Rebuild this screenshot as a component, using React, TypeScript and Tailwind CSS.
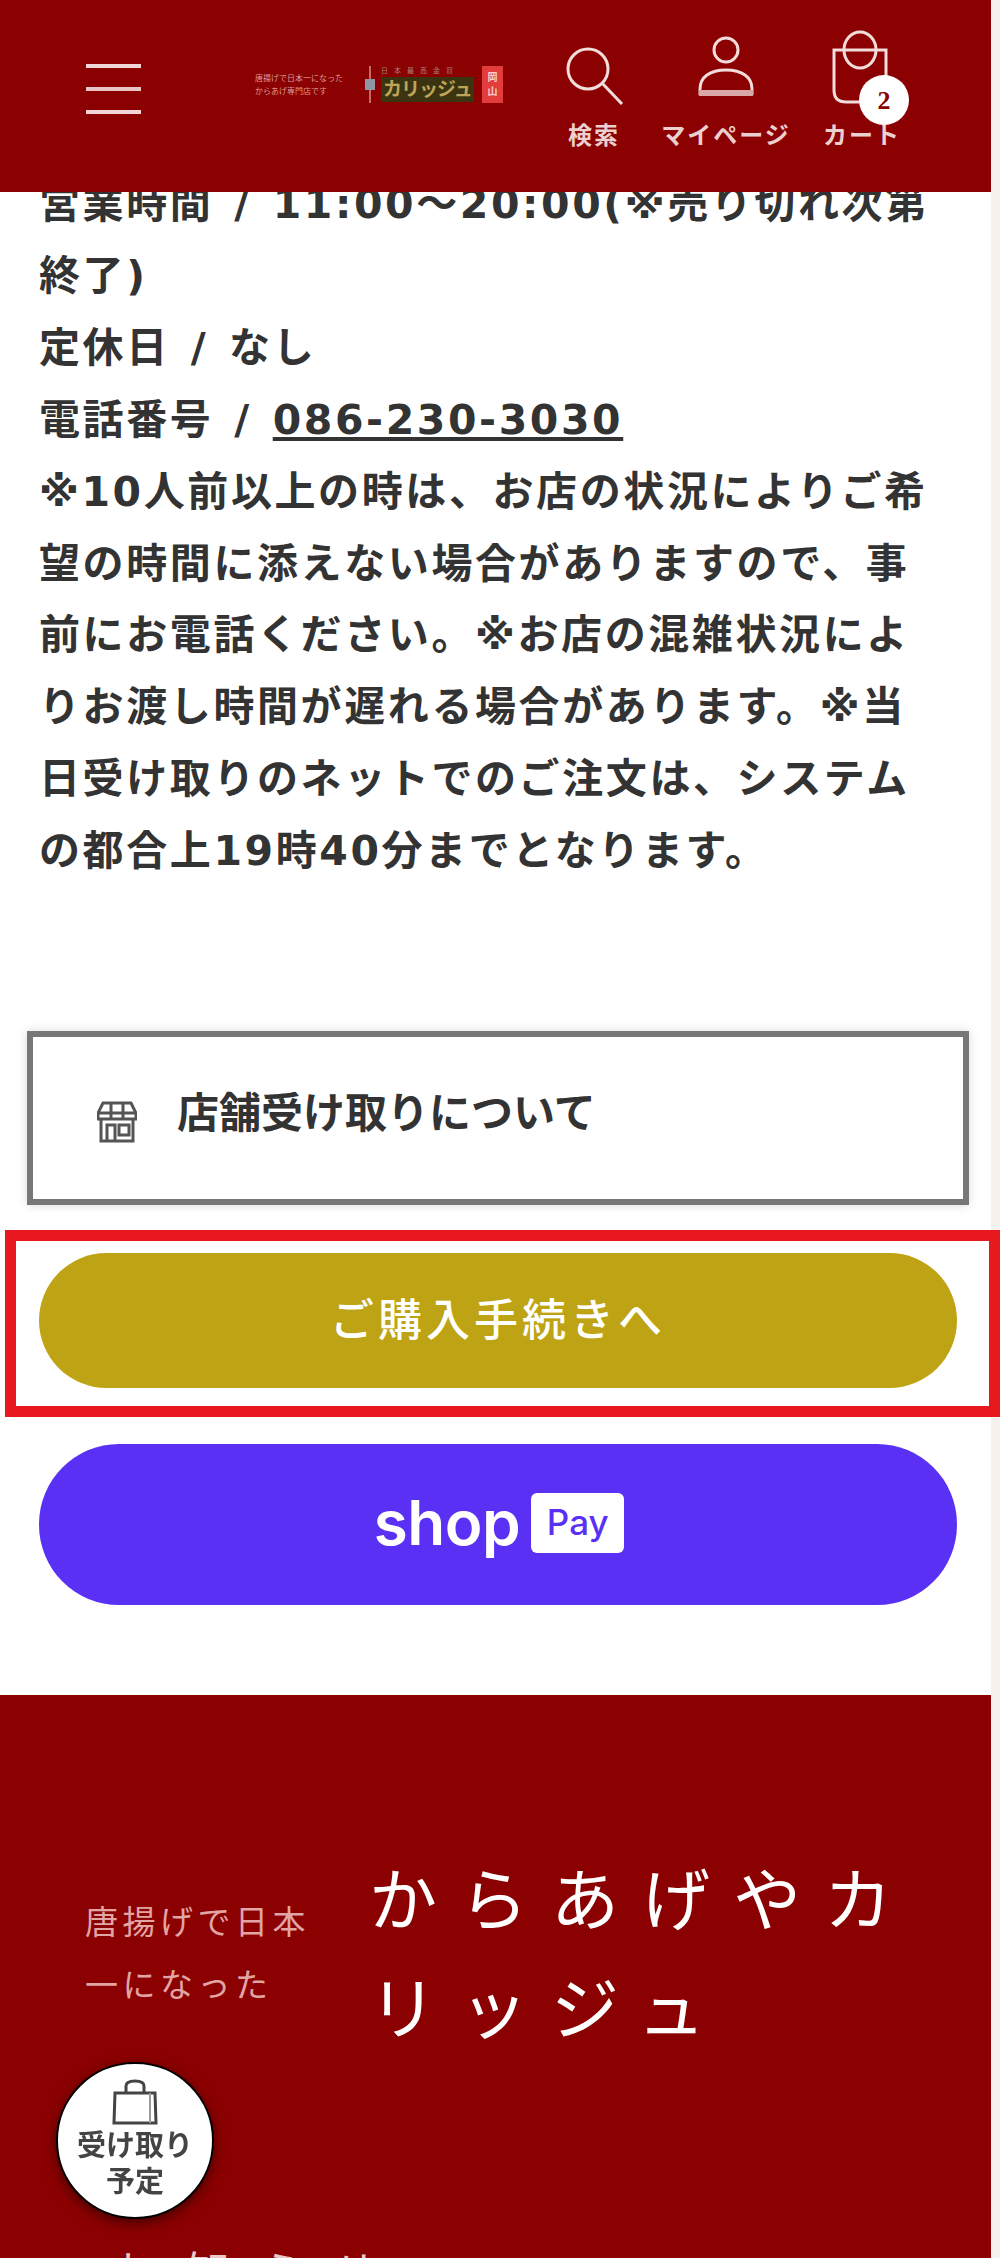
const cjk = 'font-["DejaVu_Sans","Noto_Sans_CJK_JP",sans-serif]'

const bodyLines = [
  '営業時間 / 11:00〜20:00(※売り切れ次第',
  '終了)',
  '定休日 / なし',
]

const noteLines = [
  '※10人前以上の時は、お店の状況によりご希',
  '望の時間に添えない場合がありますので、事',
  '前にお電話ください。※お店の混雑状況によ',
  'りお渡し時間が遅れる場合があります。※当',
  '日受け取りのネットでのご注文は、システム',
  'の都合上19時40分までとなります。',
]

function HeaderAction({ label, className, children }: { label: string; className?: string; children: React.ReactNode }) {
  return (
    <div className={`flex w-[132px] flex-col items-center ${className ?? ''}`}>
      <div className="relative h-[90px] w-full">{children}</div>
      <span className="mt-[12px] text-[24px] leading-[28px] font-bold tracking-[2px] whitespace-nowrap text-[#ecd0d0]">{label}</span>
    </div>
  )
}

function Logo() {
  return (
    <div className="mt-[66px] ml-[114px] flex h-[37px] w-[247px] items-center">
      <div className="w-[108px] shrink-0 text-[8px] leading-[13px] whitespace-nowrap text-[#dc9a9a]">
        唐揚げで日本一になった
        <br />
        からあげ専門店です
      </div>
      <svg viewBox="0 0 14 37" className="h-[37px] w-[14px] shrink-0">
        <rect x="6" y="0" width="2" height="37" fill="#c96a6a" />
        <rect x="2" y="13" width="10" height="11" fill="#8d98a4" />
      </svg>
      <div className="ml-[4px] flex w-[95px] shrink-0 flex-col items-start">
        <span className="text-[7px] leading-[9px] tracking-[6px] whitespace-nowrap text-[#a9807c]">日本最高金賞</span>
        <span className="mt-[1px] bg-[#3a3510] px-[2px] text-[19px] leading-[25px] font-bold tracking-[-1px] whitespace-nowrap text-[#bda45a]">カリッジュ</span>
      </div>
      <div className="ml-[6px] flex h-[37px] w-[21px] shrink-0 items-center justify-center bg-[#e23c3c] text-center text-[10px] leading-[14px] font-bold text-[#f6d0d0]">
        岡
        <br />
        山
      </div>
    </div>
  )
}

function Header() {
  return (
    <header className="sticky top-0 z-10 flex h-[192px] items-start bg-[#8b0000] pl-[86px]">
      <div className="mt-[64px] flex w-[55px] shrink-0 flex-col gap-[19px]">
        <span className="h-[4px] bg-[#f0d6d6]" />
        <span className="h-[4px] bg-[#e8c4c4]" />
        <span className="h-[4px] bg-[#f0d6d6]" />
      </div>
      <Logo />
      <div className="mt-[20px] ml-[26px] flex shrink-0">
        <HeaderAction label="検索">
          <svg viewBox="0 0 60 60" className="mx-auto mt-[25px] h-[60px] w-[60px] fill-none stroke-[#f3dcdc] stroke-[3px]">
            <circle cx="24" cy="24" r="20" />
            <path d="M38 38l20 21" />
          </svg>
        </HeaderAction>
        <HeaderAction label="マイページ">
          <svg viewBox="0 0 56 62" className="mx-auto mt-[16px] h-[62px] w-[56px] fill-none stroke-[#f3dcdc] stroke-[3px]">
            <circle cx="28" cy="14" r="12" />
            <path d="M2 59v-6c0-12 10-19 26-19s26 7 26 19v6" />
            <path d="M1 57h54" strokeWidth="6" stroke="#d9a7a7" />
          </svg>
        </HeaderAction>
        <HeaderAction label="カート" className="ml-[4px]">
          <svg viewBox="0 0 60 76" className="ml-[36px] mt-[10px] h-[76px] w-[60px] fill-none stroke-[#f3dcdc] stroke-[3px]">
            <path d="M2 20h52v52H14Q2 72 2 60z" />
            <ellipse cx="28" cy="20" rx="16" ry="18" />
          </svg>
          <span className="absolute top-[55px] left-[63px] flex h-[50px] w-[50px] items-center justify-center rounded-full bg-white font-['Liberation_Serif',serif] text-[26px] font-bold text-[#8b0000]">
            2
          </span>
        </HeaderAction>
      </div>
    </header>
  )
}

function ShopPayButton() {
  return (
    <div className="mt-[56px] mr-[34px] ml-[39px] flex h-[161px] items-center justify-center gap-[11px] rounded-[80px] bg-[#5a31f4] pb-[4px] pl-[2px]">
      <span className="font-['Inter',sans-serif] text-[62px] leading-none font-semibold tracking-[-0.5px] text-white">shop</span>
      <span className="flex h-[60px] w-[93px] items-center justify-center rounded-[6px] bg-white font-['Inter',sans-serif] text-[35px] font-medium text-[#5a31f4]">
        Pay
      </span>
    </div>
  )
}

export default function App() {
  return (
    <div className={`relative min-h-[2258px] w-full overflow-hidden bg-[#f6f1ed] ${cjk}`}>
      <div className="relative h-[2258px] w-[991px] overflow-hidden bg-white">
        <Header />
        <main className="mt-[-23px]">
          <div className="pl-[39px] text-[41px] leading-[71.9px] font-bold tracking-[2.6px] [word-spacing:4px] text-[#333333]">
            {bodyLines.map((line) => (
              <div key={line} className="whitespace-nowrap">{line}</div>
            ))}
            <div className="whitespace-nowrap">
              電話番号 / <span className="underline">086-230-3030</span>
            </div>
            {noteLines.map((line) => (
              <div key={line} className="whitespace-nowrap">{line}</div>
            ))}
          </div>

          <div className="mt-[143px] mr-[22px] ml-[27px] flex h-[174px] items-center border-[6px] border-[#777777] bg-white pb-[10px] pl-[64px] shadow-[0_0_10px_rgba(0,0,0,0.15)]">
            <svg viewBox="0 0 40 42" className="mt-[18px] h-[42px] w-[40px] shrink-0 fill-none stroke-[#555555] stroke-[3px]">
              <path d="M6 2h28l5 10v6H1v-6z" />
              <path d="M14 2v16M26 2v16M1 12h38" />
              <path d="M4 18v22h32V18M10 40V24h8v16M22 24h10v10H22z" />
            </svg>
            <span className="ml-[40px] text-[42px] font-bold text-[#333333]">店舗受け取りについて</span>
          </div>

          <div className="mt-[48px]">
            <div className="mr-[34px] ml-[39px] flex h-[135px] items-center justify-center rounded-[68px] bg-[#bea414] text-[44px] font-medium tracking-[4px] text-white">
              ご購入手続きへ
            </div>
          </div>

          <ShopPayButton />

          <footer className="mt-[90px] h-[600px] bg-[#8b0000] pt-[152px] pl-[85px]">
            <div className="flex items-start">
              <p className="mt-[44px] w-[284px] shrink-0 text-[33px] leading-[63px] tracking-[4.5px] text-[#e2a5a5]">
                唐揚げで日本
                <br />
                一になった
              </p>
              <p className="text-[68px] leading-[109px] tracking-[23px] whitespace-nowrap text-white">
                からあげやカ
                <br />
                リッジュ
              </p>
            </div>
            <p className="mt-[184px] pl-[27px] text-[44px] leading-[50px] tracking-[30px] whitespace-nowrap text-[#eccaca]">お知らせ</p>
          </footer>
        </main>

        <div className="absolute top-[2062px] left-[56px] z-20 flex h-[157px] w-[158px] flex-col items-center rounded-full border-2 border-black bg-white shadow-[0_4px_12px_rgba(0,0,0,0.5)]">
          <svg viewBox="0 0 46 46" className="mt-[15px] h-[46px] w-[46px] fill-none stroke-[#444444] stroke-[3px]">
            <path d="M3 14h40l1 30H2z" />
            <path d="M14 14V7q0-5 9-5t9 5v7" />
            <path d="M38 14v30" strokeWidth="2" stroke="#999999" />
          </svg>
          <span className="mt-[3px] text-center text-[29px] leading-[36px] font-bold text-[#444444]">
            受け取り
            <br />
            予定
          </span>
        </div>
      </div>

      <div className="pointer-events-none absolute top-[1230px] left-[5px] z-30 h-[187px] w-[995px] border-[11px] border-[#e7191f]" />
    </div>
  )
}
